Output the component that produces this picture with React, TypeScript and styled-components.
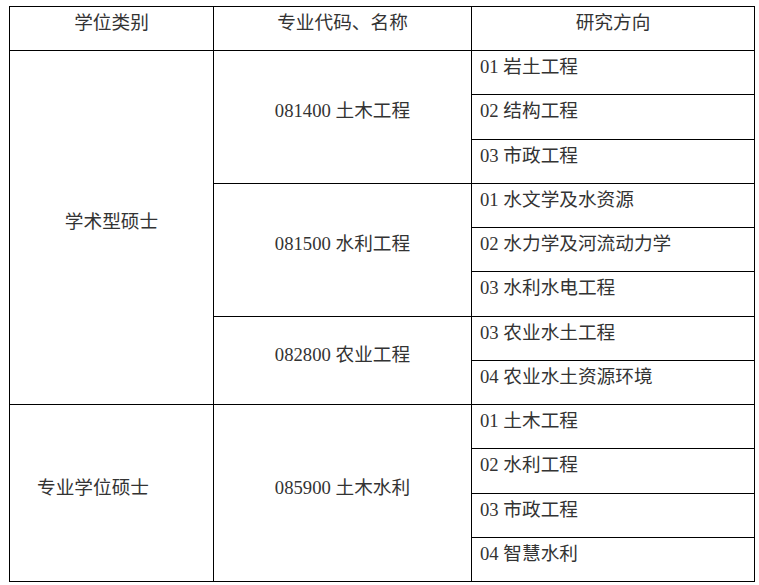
import React from "react";
import styled, { createGlobalStyle } from "styled-components";

const GlobalStyle = createGlobalStyle`
  html, body {
    margin: 0;
    padding: 0;
    background: #ffffff;
  }
  body {
    font-family: "Liberation Serif", "Noto Sans CJK SC", serif;
  }
`;

const Page = styled.div`
  padding: 6px 0 0 9px;
`;

const Table = styled.table`
  border-collapse: collapse;
  table-layout: fixed;
  width: 745px;
  font-family: "Liberation Serif", "Noto Sans CJK SC", serif;
  font-size: 18.67px;
  line-height: 28px;
  color: #333333;
`;

const HeadRow = styled.tr`
  height: 44px;
`;

const BodyRow = styled.tr`
  height: 44.25px;
`;

const Cell = styled.td<{ $align?: "left" | "center"; $shift?: number }>`
  border: 1px solid #000000;
  padding: 0 ${(p) => 8 + (p.$shift ?? 0)}px 11px 8px;
  text-align: ${(p) => p.$align ?? "center"};
  vertical-align: middle;
  white-space: nowrap;
`;

const HeadCell = styled.th`
  border: 1px solid #000000;
  padding: 0 8px 11px;
  font-weight: normal;
  text-align: center;
  vertical-align: middle;
`;

type Major = { code: string; directions: string[] };
type Group = { degree: string; shift?: number; majors: Major[] };

const data: Group[] = [
  {
    degree: "学术型硕士",
    majors: [
      { code: "081400 土木工程", directions: ["01 岩土工程", "02 结构工程", "03 市政工程"] },
      {
        code: "081500 水利工程",
        directions: ["01 水文学及水资源", "02 水力学及河流动力学", "03 水利水电工程"],
      },
      { code: "082800 农业工程", directions: ["03 农业水土工程", "04 农业水土资源环境"] },
    ],
  },
  {
    degree: "专业学位硕士",
    shift: 37,
    majors: [
      {
        code: "085900 土木水利",
        directions: ["01 土木工程", "02 水利工程", "03 市政工程", "04 智慧水利"],
      },
    ],
  },
];

export default function App() {
  const rows: React.ReactNode[] = [];
  data.forEach((g, gi) => {
    const groupSpan = g.majors.reduce((n, m) => n + m.directions.length, 0);
    g.majors.forEach((m, mi) => {
      m.directions.forEach((d, di) => {
        rows.push(
          <BodyRow key={`${gi}-${mi}-${di}`}>
            {mi === 0 && di === 0 && (
              <Cell rowSpan={groupSpan} $shift={g.shift}>
                {g.degree}
              </Cell>
            )}
            {di === 0 && <Cell rowSpan={m.directions.length}>{m.code}</Cell>}
            <Cell $align="left">{d}</Cell>
          </BodyRow>
        );
      });
    });
  });

  return (
    <>
      <GlobalStyle />
      <Page>
        <Table>
          <colgroup>
            <col style={{ width: 204 }} />
            <col style={{ width: 258 }} />
            <col style={{ width: 283 }} />
          </colgroup>
          <thead>
            <HeadRow>
              <HeadCell>学位类别</HeadCell>
              <HeadCell>专业代码、名称</HeadCell>
              <HeadCell>研究方向</HeadCell>
            </HeadRow>
          </thead>
          <tbody>{rows}</tbody>
        </Table>
      </Page>
    </>
  );
}
